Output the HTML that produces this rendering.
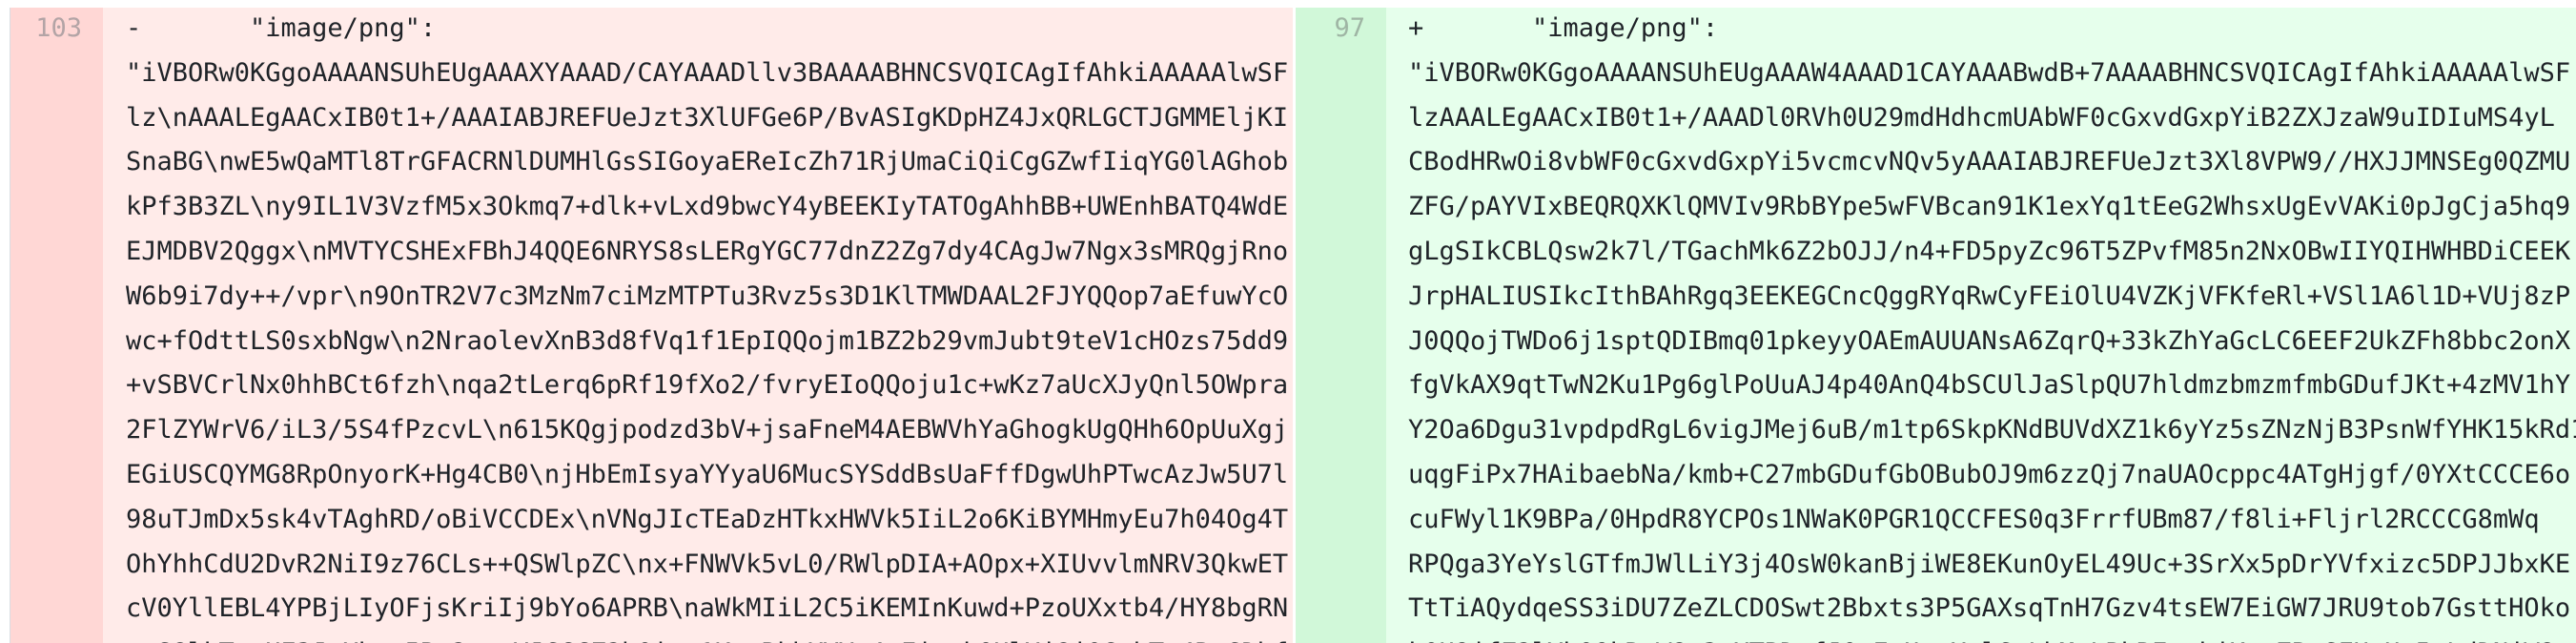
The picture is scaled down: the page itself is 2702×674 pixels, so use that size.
<!DOCTYPE html>
<html><head><meta charset="utf-8"><style>
html,body{margin:0;padding:0;width:2702px;height:674px;overflow:hidden;background:#fff;}
#w{position:relative;width:2702px;height:674px;overflow:hidden;}
.p{position:absolute;top:8px;bottom:0;}
.ln{position:absolute;top:8px;bottom:0;}
.t{position:absolute;font-family:"DejaVu Sans Mono","Liberation Mono",monospace;font-size:27px;line-height:46.8px;white-space:pre;color:#1f2328;}
.n{position:absolute;font-family:"DejaVu Sans Mono","Liberation Mono",monospace;font-size:27px;line-height:46.8px;text-align:right;}
</style></head><body><div id="w">
<div style="position:absolute;left:10px;top:8px;bottom:0;width:1px;background:#d8dee4"></div>
<div class="ln" style="left:11px;width:97px;background:#ffd7d5"></div>
<div class="p" style="left:108px;width:1248px;background:#ffebe9"></div>
<div class="ln" style="left:1359px;width:95px;background:#d1f8d9"></div>
<div class="p" style="left:1454px;right:0;background:#e6ffec"></div>
<div class="n" style="left:11px;width:75px;top:7px;color:#b3a4a6">103</div>
<div class="n" style="left:1359px;width:73px;top:7px;color:#9fb5a4">97</div>
<div class="t" style="left:132px;top:7px">-       "image/png":
"iVBORw0KGgoAAAANSUhEUgAAAXYAAAD/CAYAAADllv3BAAAABHNCSVQICAgIfAhkiAAAAAlwSF
lz\nAAALEgAACxIB0t1+/AAAIABJREFUeJzt3XlUFGe6P/BvASIgKDpHZ4JxQRLGCTJGMMEljKI
SnaBG\nwE5wQaMTl8TrGFACRNlDUMHlGsSIGoyaEReIcZh71RjUmaCiQiCgGZwfIiqYG0lAGhob
kPf3B3ZL\ny9IL1V3VzfM5x3Okmq7+dlk+vLxd9bwcY4yBEEKIyTATOgAhhBB+UWEnhBATQ4WdE
EJMDBV2Qggx\nMVTYCSHExFBhJ4QQE6NRYS8sLERgYGC77dnZ2Zg7dy4CAgJw7Ngx3sMRQgjRno
W6b9i7dy++/vpr\n9OnTR2V7c3MzNm7ciMzMTPTu3Rvz5s3D1KlTMWDAAL2FJYQQop7aEfuwYcO
wc+fOdttLS0sxbNgw\n2NraolevXnB3d8fVq1f1EpIQQojm1BZ2b29vmJubt9teV1cHOzs75dd9
+vSBVCrlNx0hhBCt6fzh\nqa2tLerq6pRf19fXo2/fvryEIoQQoju1c+wKz7aUcXJyQnl5OWpra
2FlZYWrV6/iL3/5S4fPzcvL\n615KQgjpodzd3bV+jsaFneM4AEBWVhYaGhogkUgQHh6OpUuXgj
EGiUSCQYMG8RpOnyorK+Hg4CB0\njHbEmIsyaYYyaU6MucSYSddBsUaFffDgwUhPTwcAzJw5U7l
98uTJmDx5sk4vTAghRD/oBiVCCDEx\nVNgJIcTEaDzHTkxHWVk5IiL2o6KiBYMHmyEu7h04Og4T
OhYhhCdU2DvR2NiI9z76CLs++QSWlpZC\nx+FNWVk5vL0/RWlpDIA+AOpx+XIUvvlmNRV3QkwET
cV0YllEBL4YPBjLIyOFjsKriIj9bYo6APRB\naWkMIiL2C5iKEMInKuwd+PzoUXxtb4/HY8bgRN
wnS8lkTqoHE3JxXhyg5Ba2mrtVJ6GCZ2b0iqa1KqeBkhXYVq4aFjgxk0HlXj8j0GxhTn4Rc6Dhf</div>
<div class="t" style="left:1477px;top:7px">+       "image/png":
"iVBORw0KGgoAAAANSUhEUgAAAW4AAAD1CAYAAABwdB+7AAAABHNCSVQICAgIfAhkiAAAAAlwSF
lzAAALEgAACxIB0t1+/AAADl0RVh0U29mdHdhcmUAbWF0cGxvdGxpYiB2ZXJzaW9uIDIuMS4yL
CBodHRwOi8vbWF0cGxvdGxpYi5vcmcvNQv5yAAAIABJREFUeJzt3Xl8VPW9//HXJJMNSEg0QZMU
ZFG/pAYVIxBEQRQXKlQMVIv9RbBYpe5wFVBcan91K1exYq1tEeG2WhsxUgEvVAKi0pJgCja5hq9
gLgSIkCBLQsw2k7l/TGachMk6Z2bOJJ/n4+FD5pyZc96T5ZPvfM85n2NxOBwIIYQIHWHBDiCEEK
JrpHALIUSIkcIthBAhRgq3EEKEGCncQggRYqRwCyFEiOlU4VZKjVFKfeRl+VSl1A6l1D+VUj8zP
J0QQojTWDo6j1sptQDIBmq01pkeyyOAEmAUUANsA6ZqrQ+33kZhYaGcLC6EEF2UkZFh8bbc2onX
fgVkAX9qtTwN2Ku1Pg6glPoUuAJ4p40AnQ4bSCUlJaSlpQU7hldmzbmzmfmbGDufJKt+4zMV1hY
Y2Oa6Dgu31vpdpdRgL6vigJMej6uB/m1tp6SkpKNdBUVdXZ1k6yYz5sZNzNjB3PsnWfYHK15kRd1
uqgFiPx7HAibaebNa/kmb+C27mbGDufGbOBubOJ9m6zzQj7naUAOcppc4ATgHjgf/0YXtCCCE6o
cuFWyl1K9BPa/0HpdR8YCPOs1NWaK0PGR1QCCFES0q3FrrfUBm87/f8li+Fljrl2RCCCG8mWq
RPQga3YeYslGTfmJWlLiY3j4OsW0kanBjiWE8EKunOyEL49Uc+3SrXx5pDrYVfxizc5DPJJbxKE
TtTiAQydqeSS3iDU7ZeZLCDOSwt2Bbxts3P5GAXsqTnH7Gzv4tsEW7EiGW7JRU9tob7GsttHOko
k0U9jfZ2lYh0QkRaW8s3rXTBDpfJ0sEvUvtXyl6oLhMaLBhREsakjKzaZPm6FHnHy5nLdDNjW8q</div>
</div></body></html>
